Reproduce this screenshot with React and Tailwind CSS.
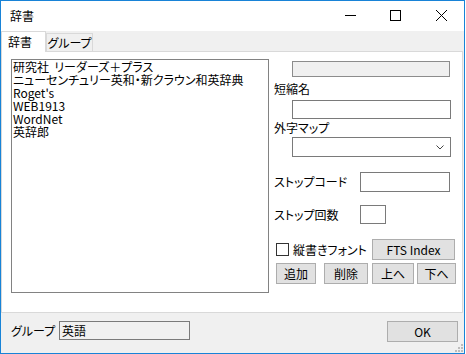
import React from 'react';

const font = "font-['Noto_Sans_CJK_JP','Noto_Sans',sans-serif] [font-feature-settings:'palt']";

const entries = [
  '研究社  リーダーズ＋プラス',
  'ニューセンチュリー英和・新クラウン和英辞典',
  "Roget's",
  'WEB1913',
  'WordNet',
  '英辞郎',
];

const Btn = ({ w, children, className = '' }) => (
  <div className={`flex h-[21px] items-center justify-center border border-[#adadad] bg-[#e1e1e1] text-[12px] leading-none text-black ${w} ${className}`}>
    {children}
  </div>
);

export default function App() {
  return (
    <div className={`h-[354px] w-[466px] bg-white ${font}`}>
      <div className="flex h-[354px] w-[465px] flex-col border border-[#1883d7] bg-[#f0f0f0] text-[12px] text-black">
        {/* title bar */}
        <div className="flex h-[30px] shrink-0 bg-white">
          <span className="ml-[9px] mt-[7px] leading-[16px]">辞書</span>
          <div className="ml-auto flex h-full">
            <div className="w-[46px] pl-[19px] pt-[9px]">
              <svg width="11" height="11" viewBox="0 0 11 11">
                <line x1="0" y1="5.5" x2="11" y2="5.5" stroke="#000" strokeWidth="1" />
              </svg>
            </div>
            <div className="w-[46px] pl-[18px] pt-[9px]">
              <svg width="11" height="11" viewBox="0 0 11 11">
                <rect x="0.5" y="0.5" width="10" height="10" fill="none" stroke="#000" strokeWidth="1" />
              </svg>
            </div>
            <div className="w-[46px] pl-[18px] pt-[9px]">
              <svg width="11" height="11" viewBox="0 0 11 11">
                <path d="M0 0 L11 11 M11 0 L0 11" stroke="#000" strokeWidth="1" />
              </svg>
            </div>
          </div>
        </div>

        {/* tabs */}
        <div className="flex h-[20px] shrink-0 items-end">
          <div className="relative z-10 -mb-px flex h-[21px] w-[45px] items-center border-x border-t border-[#d9d9d9] bg-white pl-[6px]">
            辞書
          </div>
          <div className="flex h-[18px] w-[47px] items-center justify-center border-x border-t border-[#d9d9d9] bg-[#f0f0f0]">
            グループ
          </div>
        </div>

        {/* panel */}
        <div className="flex h-[262px] w-[462px] shrink-0 items-start border border-[#d9d9d9] bg-white">
          <div className="ml-[9px] mt-[7px] h-[234px] w-[258px] overflow-hidden border border-[#828282] bg-white pl-px">
            {entries.map((e) => (
              <div key={e} className="h-[13px] overflow-visible whitespace-pre leading-[13px]">
                {e}
              </div>
            ))}
          </div>

          <div className="ml-[5px] flex w-[183px] flex-col">
            <div className="ml-[18px] mt-[9px] h-[16px] w-[158px] border border-[#8c8c8c] bg-[#f0f0f0]" />
            <div className="mt-[5px] h-[14px] leading-[14px]">短縮名</div>
            <div className="ml-[18px] mt-[4px] h-[19px] w-[159px] border border-[#7a7a7a] bg-white" />
            <div className="mt-[2px] h-[14px] leading-[14px]">外字マップ</div>
            <div className="ml-[18px] mt-[2px] flex h-[20px] w-[159px] items-center justify-end border border-[#7a7a7a] bg-white pr-[6px]">
              <svg width="8" height="5" viewBox="0 0 8 5">
                <path d="M0.5 0.5 L4 4 L7.5 0.5" fill="none" stroke="#444" strokeWidth="1" />
              </svg>
            </div>

            <div className="mt-[15px] flex h-[20px] items-center">
              <span className="w-[86px] whitespace-nowrap">ストップコード</span>
              <div className="h-[20px] w-[90px] border border-[#7a7a7a] bg-white" />
            </div>
            <div className="mt-[13px] flex h-[19px] items-center">
              <span className="w-[86px] whitespace-nowrap">ストップ回数</span>
              <div className="h-[19px] w-[26px] border border-[#7a7a7a] bg-white" />
            </div>

            <div className="mt-[15px] flex h-[21px] items-center">
              <div className="flex w-[98px] items-center">
                <div className="ml-[2px] h-[13px] w-[13px] border border-[#333] bg-white" />
                <span className="ml-[4px] whitespace-nowrap">縦書きフォント</span>
              </div>
              <Btn w="w-[83px]">FTS Index</Btn>
            </div>

            <div className="mt-[3px] flex h-[21px]">
              <Btn w="w-[40px]" className="ml-[2px]">追加</Btn>
              <Btn w="w-[44px]" className="ml-[8px]">削除</Btn>
              <Btn w="w-[42px]" className="ml-[4px]">上へ</Btn>
              <Btn w="w-[39px]" className="ml-[3px]">下へ</Btn>
            </div>
          </div>
        </div>

        {/* bottom */}
        <div className="relative flex h-[40px] shrink-0 items-start pt-[8px]">
          <div className="ml-[10px] flex h-[19px] w-[48px] items-center">グループ</div>
          <div className="flex h-[19px] w-[131px] items-center border border-[#7a7a7a] bg-[#f0f0f0] pl-[2px]">英語</div>
          <Btn w="w-[71px]" className="ml-auto mr-[6px]">OK</Btn>
          <svg className="absolute bottom-[1px] right-[1px]" width="8" height="8" viewBox="0 0 8 8">
            <rect x="6" y="0" width="2" height="2" fill="#bcbcbc" />
            <rect x="3" y="3" width="2" height="2" fill="#bcbcbc" />
            <rect x="6" y="3" width="2" height="2" fill="#bcbcbc" />
            <rect x="0" y="6" width="2" height="2" fill="#bcbcbc" />
            <rect x="3" y="6" width="2" height="2" fill="#bcbcbc" />
            <rect x="6" y="6" width="2" height="2" fill="#bcbcbc" />
          </svg>
        </div>
      </div>
    </div>
  );
}
